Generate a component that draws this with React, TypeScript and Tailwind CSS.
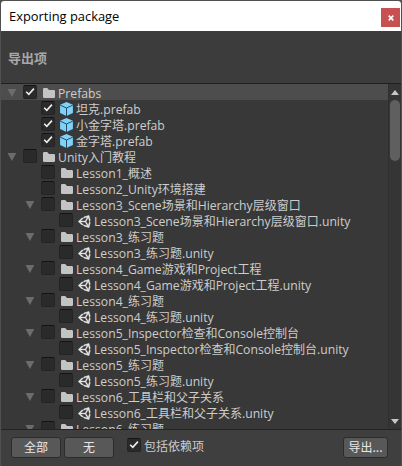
type Kind = "folder" | "prefab" | "scene";
type Item = { name: string; depth: number; kind: Kind; open?: boolean; checked?: boolean };

const items: Item[] = [
  { name: "Prefabs", depth: 0, kind: "folder", open: true, checked: true },
  { name: "坦克.prefab", depth: 1, kind: "prefab", checked: true },
  { name: "小金字塔.prefab", depth: 1, kind: "prefab", checked: true },
  { name: "金字塔.prefab", depth: 1, kind: "prefab", checked: true },
  { name: "Unity入门教程", depth: 0, kind: "folder", open: true },
  { name: "Lesson1_概述", depth: 1, kind: "folder" },
  { name: "Lesson2_Unity环境搭建", depth: 1, kind: "folder" },
  { name: "Lesson3_Scene场景和Hierarchy层级窗口", depth: 1, kind: "folder", open: true },
  { name: "Lesson3_Scene场景和Hierarchy层级窗口.unity", depth: 2, kind: "scene" },
  { name: "Lesson3_练习题", depth: 1, kind: "folder", open: true },
  { name: "Lesson3_练习题.unity", depth: 2, kind: "scene" },
  { name: "Lesson4_Game游戏和Project工程", depth: 1, kind: "folder", open: true },
  { name: "Lesson4_Game游戏和Project工程.unity", depth: 2, kind: "scene" },
  { name: "Lesson4_练习题", depth: 1, kind: "folder", open: true },
  { name: "Lesson4_练习题.unity", depth: 2, kind: "scene" },
  { name: "Lesson5_Inspector检查和Console控制台", depth: 1, kind: "folder", open: true },
  { name: "Lesson5_Inspector检查和Console控制台.unity", depth: 2, kind: "scene" },
  { name: "Lesson5_练习题", depth: 1, kind: "folder", open: true },
  { name: "Lesson5_练习题.unity", depth: 2, kind: "scene" },
  { name: "Lesson6_工具栏和父子关系", depth: 1, kind: "folder", open: true },
  { name: "Lesson6_工具栏和父子关系.unity", depth: 2, kind: "scene" },
  { name: "Lesson6_练习题", depth: 1, kind: "folder", open: true },
];

const indents = ["pl-[4px]", "pl-[22px]", "pl-[40px]"];

function Check({ on }: { on?: boolean }) {
  return (
    <span className="flex h-[14px] w-[14px] shrink-0 items-center justify-center rounded-[2px] border border-[#242424] border-t-[#131313] bg-[#2a2a2a]">
      {on && (
        <svg width="10" height="10" viewBox="0 0 10 10" fill="none">
          <path d="M1.2 4.8 3.8 7.4 8.9 1.6" stroke="#eeeeee" strokeWidth="1.6" />
        </svg>
      )}
    </span>
  );
}

function KindIcon({ kind }: { kind: Kind }) {
  if (kind === "folder")
    return (
      <svg className="mt-px shrink-0" width="14" height="14" viewBox="0 0 14 14">
        <path d="M1 3.2Q1 2 2.2 2H5.2L7 4H11.8Q13 4 13 5.2V10.8Q13 12 11.8 12H2.2Q1 12 1 10.8Z" fill="#c4c4c4" />
      </svg>
    );
  if (kind === "prefab")
    return (
      <svg className="mt-px shrink-0" width="14" height="14" viewBox="0 0 14 14">
        <path d="M6.5 0 12.9 2.7V11L6.5 14 .1 11V2.7Z" fill="#7dd3fb" />
        <path d="M.3 3.2 6.5 6 12.7 3.2M6.5 6V14" stroke="#294b5c" strokeWidth="1" fill="none" />
      </svg>
    );
  return (
    <svg className="mt-[2px] mr-px shrink-0" width="13" height="13" viewBox="16 0 500 512" fill="#e6e6e6" stroke="#e6e6e6" strokeWidth="10">
      <path d="M498.11,206.4,445.31,14.72,248.2,66.08,219,116.14l-59.2-.43L15.54,256,159.82,396.32l59.17-.43,29.24,50,197.08,51.36,52.8-191.62-30-49.63ZM223.77,124.2,374.55,86.51,288,232.33H114.87Zm0,263.63L114.87,279.71H288l86.55,145.81Zm193,14L330.17,256l86.58-145.84L458.56,256Z" />
    </svg>
  );
}

function Label({ text }: { text: string }) {
  return (
    <span className="flex h-4 items-baseline whitespace-pre leading-[14px] text-[#cdcdcd]">
      {text.split(/([\u4e00-\u9fff]+)/).filter(Boolean).map((run, i) =>
        /[\u4e00-\u9fff]/.test(run) ? (
          <span key={i} className="font-['Noto_Sans_CJK_SC',sans-serif] text-[12px] leading-[14px]">{run}</span>
        ) : (
          <span key={i} className="font-['Open_Sans','Noto_Sans_CJK_SC',sans-serif] text-[12.2px] leading-4">{run}</span>
        ),
      )}
    </span>
  );
}

function Row({ item, selected }: { item: Item; selected: boolean }) {
  return (
    <div className={`flex h-4 shrink-0 items-center ${indents[item.depth]} ${selected ? "bg-[#4d4d4d]" : ""}`}>
      <span className="flex w-[18px] shrink-0 pt-px pl-[2px]">
        {item.open && (
          <svg width="10" height="10" viewBox="0 0 10 10">
            <path d="M.5 1H9.3L4.9 9Z" fill="#6c6c6c" />
          </svg>
        )}
      </span>
      <Check on={item.checked} />
      <span className="ml-[5px] flex">
        <KindIcon kind={item.kind} />
      </span>
      <span className="ml-[2px] pt-[3px]">
        <Label text={item.name} />
      </span>
    </div>
  );
}

function Button({ text, width }: { text: string; width: string }) {
  return (
    <button className={`flex h-[21px] items-center justify-center rounded-[3px] border border-[#2c2c2c] bg-[#585858] pb-px ${width} font-['Noto_Sans_CJK_SC',sans-serif] text-[12px] leading-4 text-[#e8e8e8]`}>
      {text}
    </button>
  );
}

export default function App() {
  return (
    <div className="h-[466px] w-[402px] overflow-hidden bg-[#505050] pt-px pr-px pl-px">
      <div className="flex h-[465px] flex-col overflow-hidden rounded-[3px] bg-[#3c3c3c]">
        <header className="flex h-[30px] shrink-0 items-center justify-between bg-white pr-px pl-[8px]">
          <h1 className="font-['Open_Sans',sans-serif] text-[12.9px] leading-4 text-black">Exporting package</h1>
          <button className="mt-[3px] flex h-[19px] w-[19px] items-center justify-center bg-[#c75050]">
            <svg width="6" height="6" viewBox="0 0 6 6">
              <path d="M.7.7 5.3 5.3M5.3.7.7 5.3" stroke="white" strokeWidth="1.7" />
            </svg>
          </button>
        </header>
        <div className="flex h-[53px] shrink-0 items-center border-b border-[#202020] pt-[1px] pl-[7px] font-['Noto_Sans_CJK_SC',sans-serif] text-[13px] font-bold text-[#a8a8a8]">
          导出项
        </div>
        <div className="flex h-[345px] shrink-0 overflow-hidden bg-[#383838]">
          <div className="flex min-w-0 flex-1 flex-col overflow-hidden">
            {items.map((item, i) => (
              <Row key={item.name} item={item} selected={i === 0} />
            ))}
          </div>
          <div className="flex w-[13px] flex-col items-center border-l border-[#2f2f2f] bg-[#353535]">
            <svg className="mt-[6px] shrink-0" width="8" height="5" viewBox="0 0 8 5">
              <path d="M4 0 8 5H0Z" fill="#c8c8c8" />
            </svg>
            <div className="mt-[5px] h-[61px] w-[10px] rounded-full bg-[#5f5f5f]" />
            <svg className="mt-auto mb-[5px] shrink-0" width="8" height="5" viewBox="0 0 8 5">
              <path d="M0 0H8L4 5Z" fill="#c8c8c8" />
            </svg>
          </div>
        </div>
        <footer className="flex flex-1 items-start border-t border-[#242424] bg-[#3f3f3f] pt-[7px] pr-[13px] pl-[10px]">
          <Button text="全部" width="w-[50px]" />
          <span className="ml-[3px]">
            <Button text="无" width="w-[50px]" />
          </span>
          <label className="mt-[1px] ml-[13px] flex items-start">
            <Check on />
            <span className="ml-[3px] pt-px">
              <Label text="包括依赖项" />
            </span>
          </label>
          <span className="ml-auto">
            <Button text="导出..." width="w-[45px]" />
          </span>
        </footer>
      </div>
    </div>
  );
}
